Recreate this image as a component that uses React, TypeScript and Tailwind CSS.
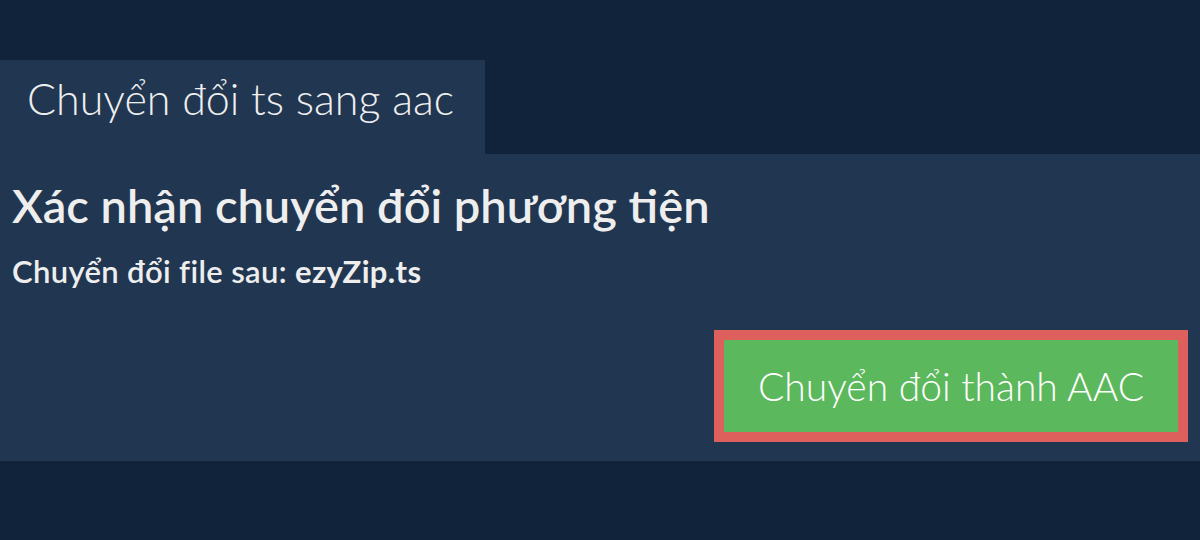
export default function App() {
  return (
    <div className="w-[1200px] h-[540px] bg-[#10233a] pt-[60px] text-[#eeeeee] font-['Lato',sans-serif]">
      <div className="w-[485px] h-[94px] bg-[#213650] pl-[27px] pt-[9px]">
        <span className="block text-[43px] font-light leading-[60px]">Chuyển đổi ts sang aac</span>
      </div>
      <div className="bg-[#213650] h-[307px] px-[12px] pt-[23px]">
        <h1 className="text-[47px] font-semibold leading-[56px]">Xác nhận chuyển đổi phương tiện</h1>
        <p className="mt-[20px] text-[31px] font-semibold leading-[36px] tracking-[0.35px]">
          Chuyển đổi file sau: <b className="font-bold">ezyZip.ts</b>
        </p>
        <div className="flex justify-end mt-[41px]">
          <button className="w-[474px] h-[112px] border-[10px] border-[#dd605d] bg-[#5cb85c] text-white text-[39px] font-light flex items-center justify-center">
            Chuyển đổi thành AAC
          </button>
        </div>
      </div>
    </div>
  );
}
